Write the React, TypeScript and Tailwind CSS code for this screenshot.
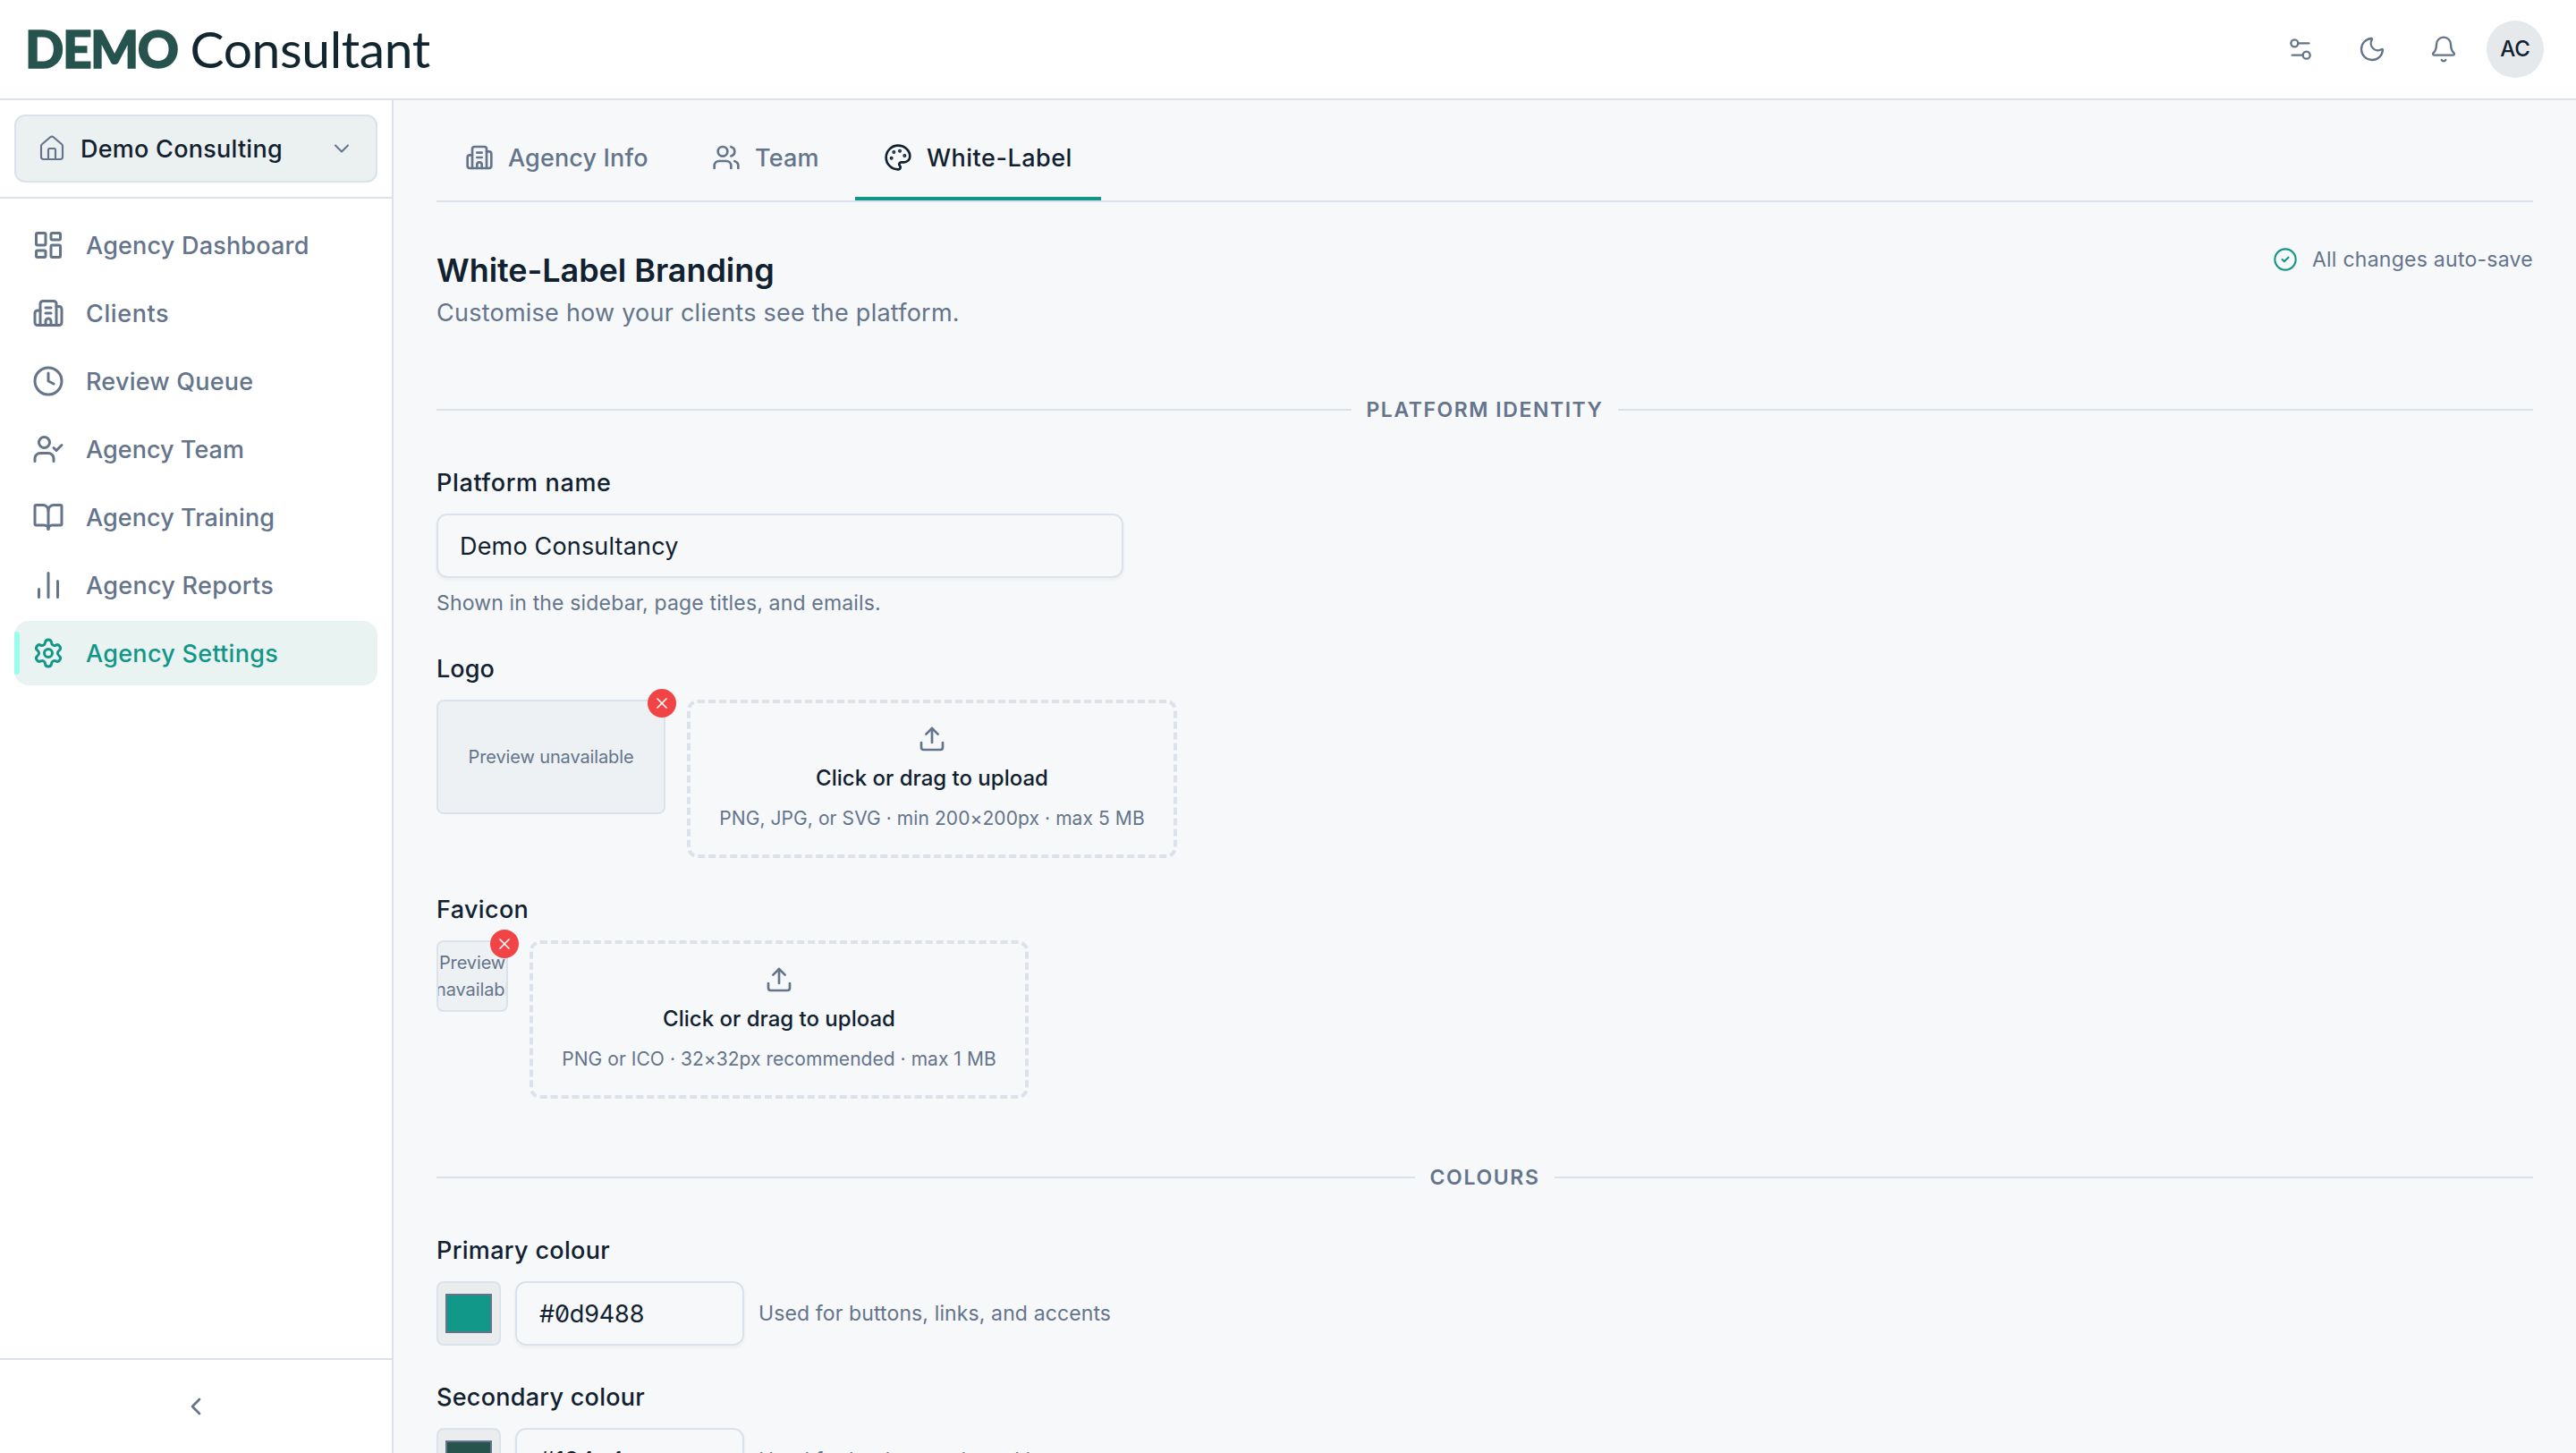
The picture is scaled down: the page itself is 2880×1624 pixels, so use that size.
import type { ReactNode } from 'react';
import {
  Bell,
  BookOpen,
  Building2,
  ChartNoAxesColumn,
  ChevronDown,
  ChevronLeft,
  CircleCheck,
  Clock,
  House,
  LayoutDashboard,
  Moon,
  Palette,
  Settings,
  Settings2,
  Upload,
  Users,
  X,
  type LucideIcon,
} from 'lucide-react';

function UserCheckIcon({ className }: { className?: string }) {
  return (
    <svg viewBox="0 0 24 24" fill="none" stroke="currentColor" strokeWidth={2} strokeLinecap="round" strokeLinejoin="round" className={className}>
      <path d="m16 11 2 2 4-4" />
      <path d="M16 21v-2a4 4 0 0 0-4-4H6a4 4 0 0 0-4 4v2" />
      <circle cx="9" cy="7" r="4" />
    </svg>
  );
}

type NavEntry = { label: string; icon: LucideIcon | typeof UserCheckIcon; tracking: string; active?: boolean };

const NAV: NavEntry[] = [
  { label: 'Agency Dashboard', icon: LayoutDashboard, tracking: 'tracking-[0.2px]' },
  { label: 'Clients', icon: Building2, tracking: 'tracking-[0.6px]' },
  { label: 'Review Queue', icon: Clock, tracking: 'tracking-[0.22px]' },
  { label: 'Agency Team', icon: UserCheckIcon, tracking: 'tracking-[0.04px]' },
  { label: 'Agency Training', icon: BookOpen, tracking: 'tracking-[0.06px]' },
  { label: 'Agency Reports', icon: ChartNoAxesColumn, tracking: 'tracking-[0.29px]' },
  { label: 'Agency Settings', icon: Settings, tracking: 'tracking-[0.28px]', active: true },
];

function Header() {
  return (
    <header className="flex h-28 shrink-0 items-center justify-between border-b-2 border-[#dce1ea] bg-white pl-7 pr-9">
      <div className="flex items-baseline gap-[14px] pb-0.5 font-['Lato',sans-serif] text-[57px] leading-[72px]">
        <span className="font-black tracking-[-1.5px] text-[#26534e] [-webkit-text-stroke:1.5px_#26534e]">DEMO</span>
        <span className="tracking-[-0.4px] text-[#12262f]">Consultant</span>
      </div>
      <div className="flex items-center text-[#64748b]">
        <div className="mr-3 flex gap-2">
          {[Settings2, Moon, Bell].map((Icon, i) => (
            <button key={i} className="flex size-18 items-center justify-center">
              <Icon className="size-8" strokeWidth={1.75} />
            </button>
          ))}
        </div>
        <div className="flex size-16 items-center justify-center rounded-full bg-[#e6e9ec] text-2xl font-medium text-[#11212f]">AC</div>
      </div>
    </header>
  );
}

function Sidebar() {
  return (
    <aside className="flex w-110 shrink-0 flex-col border-r-2 border-[#dce1ea] bg-white">
      <div className="border-b-2 border-[#dce1ea] p-4">
        <button className="flex h-19 w-[406px] items-center rounded-xl border-2 border-[#dce1ea] bg-[#ebf0f1] px-6 text-[#64748b]">
          <House className="size-8" strokeWidth={1.6} />
          <span className="ml-4 flex-1 pt-0.5 text-left text-[27px] font-medium tracking-[0.25px] text-[#11212f]">Demo Consulting</span>
          <ChevronDown className="size-7" strokeWidth={1.75} />
        </button>
      </div>
      <nav className="flex flex-1 flex-col gap-1 px-4 pt-4">
        {NAV.map(({ label, icon: Icon, tracking, active }) => (
          <a
            key={label}
            className={`relative flex h-18 w-[406px] items-center gap-6 overflow-hidden rounded-2xl pl-5 text-[27px] font-medium ${tracking} ${
              active ? 'bg-[#e9f3f2] text-[#129688]' : 'text-[#64748b]'
            }`}
          >
            {active && <span className="absolute left-0 top-3 h-12 w-1.5 rounded-r-[4px] bg-[#99fdec]" />}
            <Icon className="size-9" />
            <span className="pt-0.5">{label}</span>
          </a>
        ))}
      </nav>
      <div className="flex h-[106px] items-center justify-center border-t-2 border-[#dce1ea] text-[#64748b]">
        <ChevronLeft className="size-8" />
      </div>
    </aside>
  );
}

function Tab({ icon: Icon, label, width, tracking, active }: { icon: LucideIcon; label: string; width: string; tracking: string; active?: boolean }) {
  return (
    <button
      className={`flex h-24 items-center gap-4 border-b-4 pl-8 pt-1 text-[27px] font-medium whitespace-nowrap ${width} ${tracking} ${
        active ? 'border-[#129688] text-[#11212f]' : 'border-transparent text-[#64748b]'
      }`}
    >
      <Icon className="size-8" />
      <span className="pt-0.5">{label}</span>
    </button>
  );
}

function SectionDivider({ tracking, children }: { tracking: string; children: ReactNode }) {
  return (
    <div className="flex h-10 items-center gap-4">
      <span className="h-0.5 flex-1 bg-[#dce2e9]" />
      <span className={`text-[23px] leading-10 font-semibold text-[#64748b] ${tracking}`}>{children}</span>
      <span className="h-0.5 flex-1 bg-[#dce2e9]" />
    </div>
  );
}

function Label({ tracking, children }: { tracking: string; children: ReactNode }) {
  return <label className={`block h-10 text-[27px] leading-[42px] font-medium text-[#11212f] ${tracking}`}>{children}</label>;
}

function Preview({ size }: { size: string }) {
  return (
    <div className={`relative ${size}`}>
      <div className="flex size-full items-center justify-center overflow-hidden rounded-lg border-2 border-[#dce2e9] bg-[#edf1f4]">
        <span className="text-center text-[20px] leading-[30px] tracking-[-0.12px] text-[#64748b]">Preview unavailable</span>
      </div>
      <button className="absolute -right-3 -top-3 flex size-8 items-center justify-center rounded-full bg-[#f14446] text-white">
        <X className="size-5" strokeWidth={2} />
      </button>
    </div>
  );
}

function DropZone({ width, hint, tracking }: { width: string; hint: string; tracking: string }) {
  return (
    <div className={`flex h-[177px] flex-col items-center rounded-xl border-4 border-dashed border-[#dce1ea] pt-6 ${width}`}>
      <Upload className="size-8 text-[#64748b]" />
      <span className="mt-2.5 text-2xl leading-9 font-medium text-[#11212f]">Click or drag to upload</span>
      <span className={`mt-[9px] text-[21px] leading-9 whitespace-nowrap text-[#64748b] ${tracking}`}>{hint}</span>
    </div>
  );
}

function ColourRow({ swatch, value, hint }: { swatch: string; value: string; hint: string }) {
  return (
    <div className="mt-[15px] flex items-center gap-4">
      <div className="flex size-18 items-center justify-center rounded-lg border-2 border-[#dce2e9] bg-[#ebeced]">
        <div className={`h-11 w-[52px] border-2 border-[#64748b] ${swatch}`} />
      </div>
      <div className="flex h-18 w-64 items-center rounded-xl border-2 border-[#dce2e9] pl-[25px] pt-0.5 text-[27px] tracking-[-0.15px] text-[#11212f] slashed-zero shadow-[0_2px_4px_rgba(15,23,42,0.05)]">
        {value}
      </div>
      <span className="text-[23px] tracking-[0.12px] text-[#64748b]">{hint}</span>
    </div>
  );
}

export default function App() {
  return (
    <div className="flex h-[1624px] w-[2880px] flex-col overflow-hidden bg-[#f6f8fa] font-['Inter',sans-serif] antialiased">
      <Header />
      <div className="flex min-h-0 flex-1">
        <Sidebar />
        <main className="flex-1 overflow-hidden px-12 pt-4">
          <div className="flex gap-2 border-b-2 border-[#dce2e9]">
            <Tab icon={Building2} label="Agency Info" width="w-[268px]" tracking="tracking-[0.15px]" />
            <Tab icon={Users} label="Team" width="w-[184px]" tracking="tracking-[0.2px]" />
            <Tab icon={Palette} label="White-Label" width="w-[275px]" tracking="tracking-[0.5px]" active />
          </div>

          <div className="mt-[50px] flex h-[103px] items-start justify-between">
            <div>
              <h1 className="mt-[5px] text-[36px] leading-[42px] font-semibold tracking-[-0.05px] text-[#11212f]">White-Label Branding</h1>
              <p className="mt-[7px] text-[27px] leading-10 tracking-[0.24px] text-[#64748b]">Customise how your clients see the platform.</p>
            </div>
            <div className="flex items-center gap-4 text-[23px] leading-7 tracking-[0.26px] text-[#64748b]">
              <CircleCheck className="size-7 text-[#129688]" strokeWidth={1.8} />
              All changes auto-save
            </div>
          </div>

          <section className="mt-[59px]">
            <SectionDivider tracking="tracking-[1.55px]">PLATFORM IDENTITY</SectionDivider>
            <div className="mt-[41px]">
              <Label tracking="tracking-[0.65px]">Platform name</Label>
              <div className="mt-[15px] flex h-18 w-192 items-center rounded-xl border-2 border-[#dce2e9] pl-6 pt-0.5 text-[27px] tracking-[0.17px] text-[#11212f] shadow-[0_2px_4px_rgba(15,23,42,0.05)]">
                Demo Consultancy
              </div>
              <p className="mt-2 text-[23px] leading-10 tracking-[0.16px] text-[#64748b]">Shown in the sidebar, page titles, and emails.</p>
            </div>
            <div className="mt-[33px]">
              <Label tracking="tracking-[0.1px]">Logo</Label>
              <div className="mt-[15px] flex items-start gap-6">
                <Preview size="h-32 w-64" />
                <DropZone width="w-[548px]" hint="PNG, JPG, or SVG · min 200×200px · max 5 MB" tracking="tracking-[0.08px]" />
              </div>
            </div>
            <div className="mt-[37px]">
              <Label tracking="tracking-[0.35px]">Favicon</Label>
              <div className="mt-[15px] flex items-start gap-6">
                <Preview size="size-20" />
                <DropZone width="w-[558px]" hint="PNG or ICO · 32×32px recommended · max 1 MB" tracking="tracking-[0.04px]" />
              </div>
            </div>
          </section>

          <section className="mt-[68px]">
            <SectionDivider tracking="tracking-[1.65px]">COLOURS</SectionDivider>
            <div className="mt-[41px]">
              <Label tracking="tracking-[0.32px]">Primary colour</Label>
              <ColourRow swatch="bg-[#129889]" value="#0d9488" hint="Used for buttons, links, and accents" />
            </div>
            <div className="mt-[37px]">
              <Label tracking="tracking-[0.27px]">Secondary colour</Label>
              <ColourRow swatch="bg-[#26534c]" value="#134e4a" hint="Used for backgrounds and hovers" />
            </div>
          </section>
        </main>
      </div>
    </div>
  );
}
